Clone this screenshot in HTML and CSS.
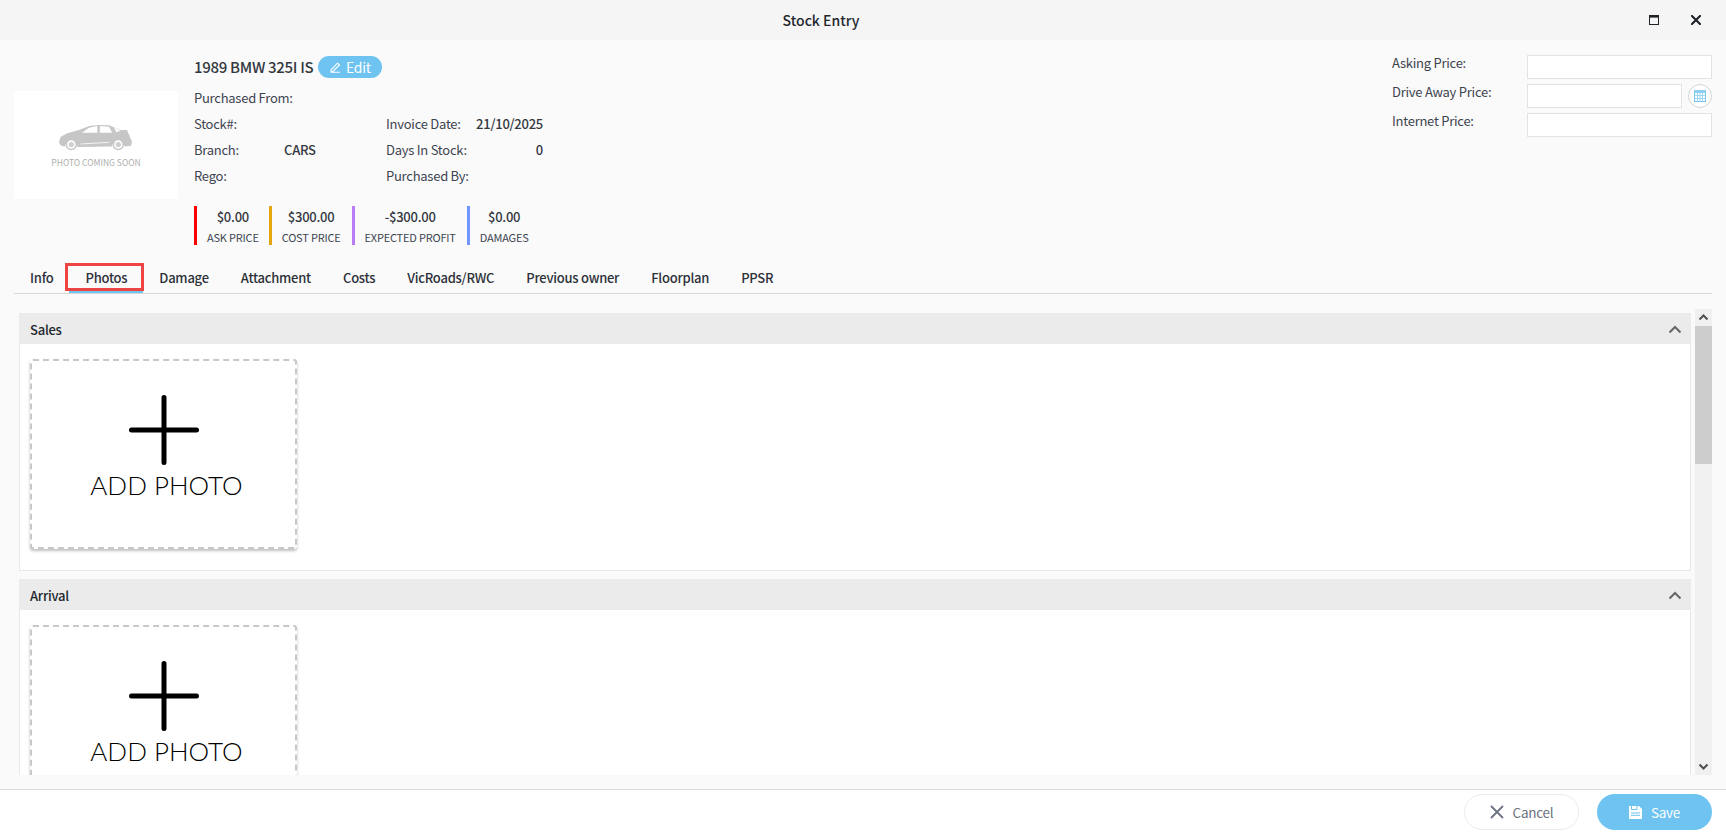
FILE: index.html
```html
<!DOCTYPE html>
<html lang="en">
<head>
<meta charset="utf-8">
<title>Stock Entry</title>
<link rel="stylesheet" href="styles.css">
</head>
<body>
<div class="window">
  <header class="titlebar">
    <div class="title">Stock Entry</div>
    <div class="win-actions">
      <svg class="win-icon" width="10" height="10" viewBox="0 0 10 10"><rect x="0.5" y="0.5" width="9" height="9" fill="none" stroke="#1f2328"/><rect x="0" y="0" width="10" height="2.6" fill="#1f2328"/></svg>
      <svg class="win-icon" width="10" height="10" viewBox="0 0 10 10"><path d="M1 1L9 9M9 1L1 9" stroke="#1f2328" stroke-width="2.1" stroke-linecap="square" fill="none"/></svg>
    </div>
  </header>

  <section class="summary">
    <div class="photo">
      <svg width="74" height="26" viewBox="0 0 74 26">
        <path d="M0 16.700L1.700 11.700L8.300 8.300L20 5L30 1L40 0L50 0.300L61.700 5L68 5L73 16.700L72 20.700L65.500 21.500C65 14 53.500 14 53 21.500L18.500 22C18 14 6.500 14 6 21.500C3 21.500 0.500 20 0 16.700Z" fill="#c6c6c6"/>
        <path d="M23 7.700L30 2.700L38.300 1L38.300 7.700ZM41 1L50 1.700L53.300 7.700L40.700 7.700ZM55 2.300L61.700 5.700L57.300 7.300Z" fill="#fff"/>
        <path d="M21.700 19L50 17.300" stroke="#fff" stroke-width="0.8"/>
        <circle cx="12.300" cy="19.500" r="5" fill="#fff" stroke="#c6c6c6" stroke-width="1.500"/><circle cx="12.300" cy="19.500" r="2.600" fill="#cfcfcf"/>
        <circle cx="59.300" cy="19.500" r="5" fill="#fff" stroke="#c6c6c6" stroke-width="1.500"/><circle cx="59.300" cy="19.500" r="2.600" fill="#cfcfcf"/>
      </svg>
      <div class="photo-text">PHOTO COMING SOON</div>
    </div>

    <div class="info">
      <div class="heading">
        <span class="car-name">1989 BMW 325I IS</span>
        <button class="edit-btn" type="button">
          <svg width="11" height="11" viewBox="0 0 11 11"><path d="M1 8L7.500 1.200L9.500 3L3 9.500L1 9.500ZM0.500 10.300H10" fill="none" stroke="#fff" stroke-width="1.100"/></svg>
          Edit
        </button>
      </div>
      <div class="facts">
        <div class="fact wide"><span class="fact-label">Purchased From:</span></div>
        <div class="fact"><span class="fact-label">Stock#:</span></div>
        <div class="fact col2"><span class="fact-label">Invoice Date:</span><span class="fact-value">21/10/2025</span></div>
        <div class="fact"><span class="fact-label branch-label">Branch:</span><span class="fact-value branch">CARS</span></div>
        <div class="fact col2"><span class="fact-label">Days In Stock:</span><span class="fact-value">0</span></div>
        <div class="fact"><span class="fact-label">Rego:</span></div>
        <div class="fact col2"><span class="fact-label">Purchased By:</span></div>
      </div>
      <div class="stats">
        <div class="stat red"><b>$0.00</b><span>ASK PRICE</span></div>
        <div class="stat amber"><b>$300.00</b><span>COST PRICE</span></div>
        <div class="stat purple"><b>-$300.00</b><span>EXPECTED PROFIT</span></div>
        <div class="stat blue"><b>$0.00</b><span>DAMAGES</span></div>
      </div>
    </div>

    <div class="prices">
      <div class="price-row"><label>Asking Price:</label><div class="input"></div></div>
      <div class="price-row"><label>Drive Away Price:</label><div class="input short"></div>
        <button class="calc" type="button">
          <svg width="12" height="12" viewBox="0 0 12 12"><rect x="0.500" y="0.500" width="11" height="11" fill="none" stroke="#6fc3f0"/><rect x="0" y="0" width="12" height="3" fill="#8ccff3"/><path d="M0 5.500H12M0 8.500H12M3.500 3V12M6 3V12M8.500 3V12" stroke="#8ccff3" stroke-width="0.800"/></svg>
        </button>
      </div>
      <div class="price-row"><label>Internet Price:</label><div class="input"></div></div>
    </div>
  </section>

  <nav class="tabs">
    <a class="tab">Info</a>
    <a class="tab active">Photos</a>
    <a class="tab">Damage</a>
    <a class="tab">Attachment</a>
    <a class="tab">Costs</a>
    <a class="tab">VicRoads/RWC</a>
    <a class="tab">Previous owner</a>
    <a class="tab">Floorplan</a>
    <a class="tab">PPSR</a>
  </nav>

  <main class="content">
    <div class="scroll">
      <section class="panel">
        <div class="panel-head"><span>Sales</span>
          <svg width="14" height="9" viewBox="0 0 14 9"><path d="M1.500 7.500L7 2L12.500 7.500" fill="none" stroke="#666" stroke-width="2"/></svg>
        </div>
        <div class="panel-body">
          <div class="add-card">
            <svg width="70" height="70" viewBox="0 0 70 70"><path d="M35 2.500V67.500M2.500 35H67.500" stroke="#000" stroke-width="5" stroke-linecap="round"/></svg>
            <div class="add-text">ADD PHOTO</div>
          </div>
        </div>
      </section>
      <section class="panel">
        <div class="panel-head"><span>Arrival</span>
          <svg width="14" height="9" viewBox="0 0 14 9"><path d="M1.500 7.500L7 2L12.500 7.500" fill="none" stroke="#666" stroke-width="2"/></svg>
        </div>
        <div class="panel-body">
          <div class="add-card">
            <svg width="70" height="70" viewBox="0 0 70 70"><path d="M35 2.500V67.500M2.500 35H67.500" stroke="#000" stroke-width="5" stroke-linecap="round"/></svg>
            <div class="add-text">ADD PHOTO</div>
          </div>
        </div>
      </section>
    </div>
    <div class="scrollbar">
      <svg class="sb-arrow" width="17" height="17" viewBox="0 0 17 17"><path d="M4.500 10.500L8.500 6.500L12.500 10.500" fill="none" stroke="#505050" stroke-width="2"/></svg>
      <div class="sb-thumb"></div>
      <div class="sb-track"></div>
      <svg class="sb-arrow" width="17" height="17" viewBox="0 0 17 17"><path d="M4.500 6.500L8.500 10.500L12.500 6.500" fill="none" stroke="#505050" stroke-width="2"/></svg>
    </div>
  </main>

  <footer class="footer">
    <button class="btn cancel" type="button">
      <svg width="14" height="14" viewBox="0 0 14 14"><path d="M1 1L13 13M13 1L1 13" stroke="#6b7280" stroke-width="1.800" fill="none"/></svg>
      Cancel
    </button>
    <button class="btn save" type="button">
      <svg width="13" height="13" viewBox="0 0 13 13"><path d="M0 0H10L13 3V13H0Z" fill="#fff"/><path d="M2.500 0V3.500H8V0M2 7H11M2 9.300H11" stroke="#6ec3f0" stroke-width="1" fill="none"/></svg>
      Save
    </button>
  </footer>
</div>
</body>
</html>
```

FILE: styles.css
```css
* { box-sizing: border-box; }
html, body { margin: 0; height: 100%; overflow: hidden; }
body {
  font-family: "Noto Sans CJK SC", "Noto Sans", sans-serif;
  font-size: 13px;
  letter-spacing: -0.25px;
  line-height: 20px;
  color: #3d4450;
  background: #fafafa;
}
button { font-family: inherit; letter-spacing: inherit; cursor: pointer; }

.window { height: 835px; display: flex; flex-direction: column; }

.titlebar {
  height: 40px;
  flex: none;
  background: #f5f5f5;
  position: relative;
  display: flex;
  align-items: center;
  justify-content: center;
  padding-right: 84px;
}
.title { font-size: 14px; font-weight: 500; color: #23272e; letter-spacing: 0; }
.win-actions {
  position: absolute;
  right: 25px;
  top: 15px;
  display: flex;
  gap: 32px;
}
.win-icon { display: block; }

.summary {
  height: 223px;
  flex: none;
  display: flex;
  padding: 15px 14px 0 14px;
}
.photo {
  width: 164px;
  height: 108px;
  margin-top: 36px;
  background: #fff;
  flex: none;
  display: flex;
  flex-direction: column;
  align-items: center;
  padding-top: 34px;
}
.photo-text { font-size: 8.5px; line-height: 12px; color: #aeaeae; margin-top: 5px; letter-spacing: 0; }

.info { margin-left: 16px; width: 400px; flex: none; }
.heading { display: flex; align-items: center; gap: 5px; height: 24px; }
.car-name { font-size: 15px; font-weight: 500; color: #33383f; letter-spacing: -0.3px; }
.edit-btn {
  width: 64px;
  height: 22px;
  border: 0;
  border-radius: 11px;
  background: #6ec3f0;
  color: #fff;
  font-size: 14px;
  line-height: 20px;
  padding: 0;
  display: flex;
  align-items: center;
  justify-content: center;
  gap: 5px;
}
.facts {
  display: grid;
  grid-template-columns: 192px 157px;
  grid-auto-rows: 26px;
  margin-top: 6px;
}
.fact { display: flex; align-items: center; }
.fact.wide { grid-column: 1 / -1; }
.fact-label { flex: none; }
.branch-label { width: 90px; }
.fact-value { margin-left: auto; font-weight: 500; color: #33383f; }
.fact-value.branch { margin-left: 0; }

.stats { display: flex; margin-top: 17px; height: 39px; }
.stat {
  border-left: 3px solid;
  padding: 1px 10px 0 10px;
  margin-right: 1px;
  display: flex;
  flex-direction: column;
  align-items: center;
}
.stat.red { margin-right: 0; }
.stat b { font-weight: 500; font-size: 13px; line-height: 20px; color: #33383f; }
.stat span { font-size: 11px; line-height: 18px; margin-top: 1px; letter-spacing: -0.2px; }
.red { border-color: #ff0000; }
.amber { border-color: #e5a50f; }
.purple { border-color: #b97cf5; }
.blue { border-color: #6f97ff; }

.prices { margin-left: auto; width: 320px; display: flex; flex-direction: column; gap: 5px; }
.price-row { display: flex; align-items: flex-start; height: 24px; }
.price-row label { width: 135px; flex: none; line-height: 16px; }
.input { width: 185px; height: 24px; background: #fff; border: 1px solid #e3e3e3; }
.input.short { width: 155px; }
.calc {
  width: 24px;
  height: 24px;
  margin-left: 6px;
  border-radius: 50%;
  border: 1px solid #d5d5d5;
  background: #fff;
  padding: 0;
  display: flex;
  align-items: center;
  justify-content: center;
}

.tabs {
  height: 31px;
  flex: none;
  margin: 0 14px;
  border-bottom: 1px solid #d8d8d8;
  display: flex;
}
.tab {
  height: 30px;
  padding: 0 16px;
  font-weight: 500;
  font-size: 13px;
  line-height: 30px;
  color: #2d3139;
  position: relative;
}
.tab.active { border-bottom: 2px solid #6ec3f0; }
.tab.active::after {
  content: "";
  position: absolute;
  left: -4px;
  right: -1px;
  top: 0;
  bottom: 0;
  border: 3px solid #ef4444;
}

.content {
  height: 495px;
  flex: none;
  padding: 15px 14px 0 19px;
  display: flex;
  gap: 4px;
}
.scroll { flex: 1; overflow: hidden; height: 466px; padding-top: 4px; }
.panel { border: 1px solid #e8e8e8; background: #fff; margin-bottom: 8px; }
.panel-head {
  height: 31px;
  background: #ebebeb;
  display: flex;
  align-items: center;
  justify-content: space-between;
  padding: 2px 9px 0 11px;
  margin: -1px -1px 0 -1px;
  font-weight: 500;
  color: #23272e;
}
.panel-body { padding: 15px 10px 20px 10px; height: 226px; }
.add-card {
  width: 267px;
  height: 190px;
  border: 2px dashed #c8c8c8;
  border-radius: 3px;
  box-shadow: 0 2px 3px rgba(0, 0, 0, 0.25);
  background: #fff;
  display: flex;
  flex-direction: column;
  align-items: center;
  padding-top: 34px;
}
.add-text {
  font-family: Lato, sans-serif;
  font-weight: 300;
  font-size: 26px;
  letter-spacing: 0;
  line-height: 32px;
  color: #000;
  margin-top: 4px;
  padding-left: 6px;
}

.scrollbar {
  width: 17px;
  height: 466px;
  flex: none;
  background: #f0f0f0;
  display: flex;
  flex-direction: column;
}
.sb-arrow { display: block; flex: none; }
.sb-thumb { height: 138px; background: #cdcdcd; flex: none; }
.sb-track { flex: 1; }

.footer {
  height: 46px;
  flex: none;
  background: #fff;
  border-top: 1px solid #d8d8d8;
  display: flex;
  justify-content: flex-end;
  gap: 18px;
  padding: 4px 14px 0 0;
}
.btn {
  width: 115px;
  height: 36px;
  border-radius: 18px;
  font-size: 13.5px;
  display: flex;
  align-items: center;
  justify-content: center;
  gap: 9px;
  padding: 0;
}
.cancel { background: #fff; border: 1px solid #ececec; color: #6b7280; }
.save { background: #6ec3f0; border: 0; color: #fff; }
```
